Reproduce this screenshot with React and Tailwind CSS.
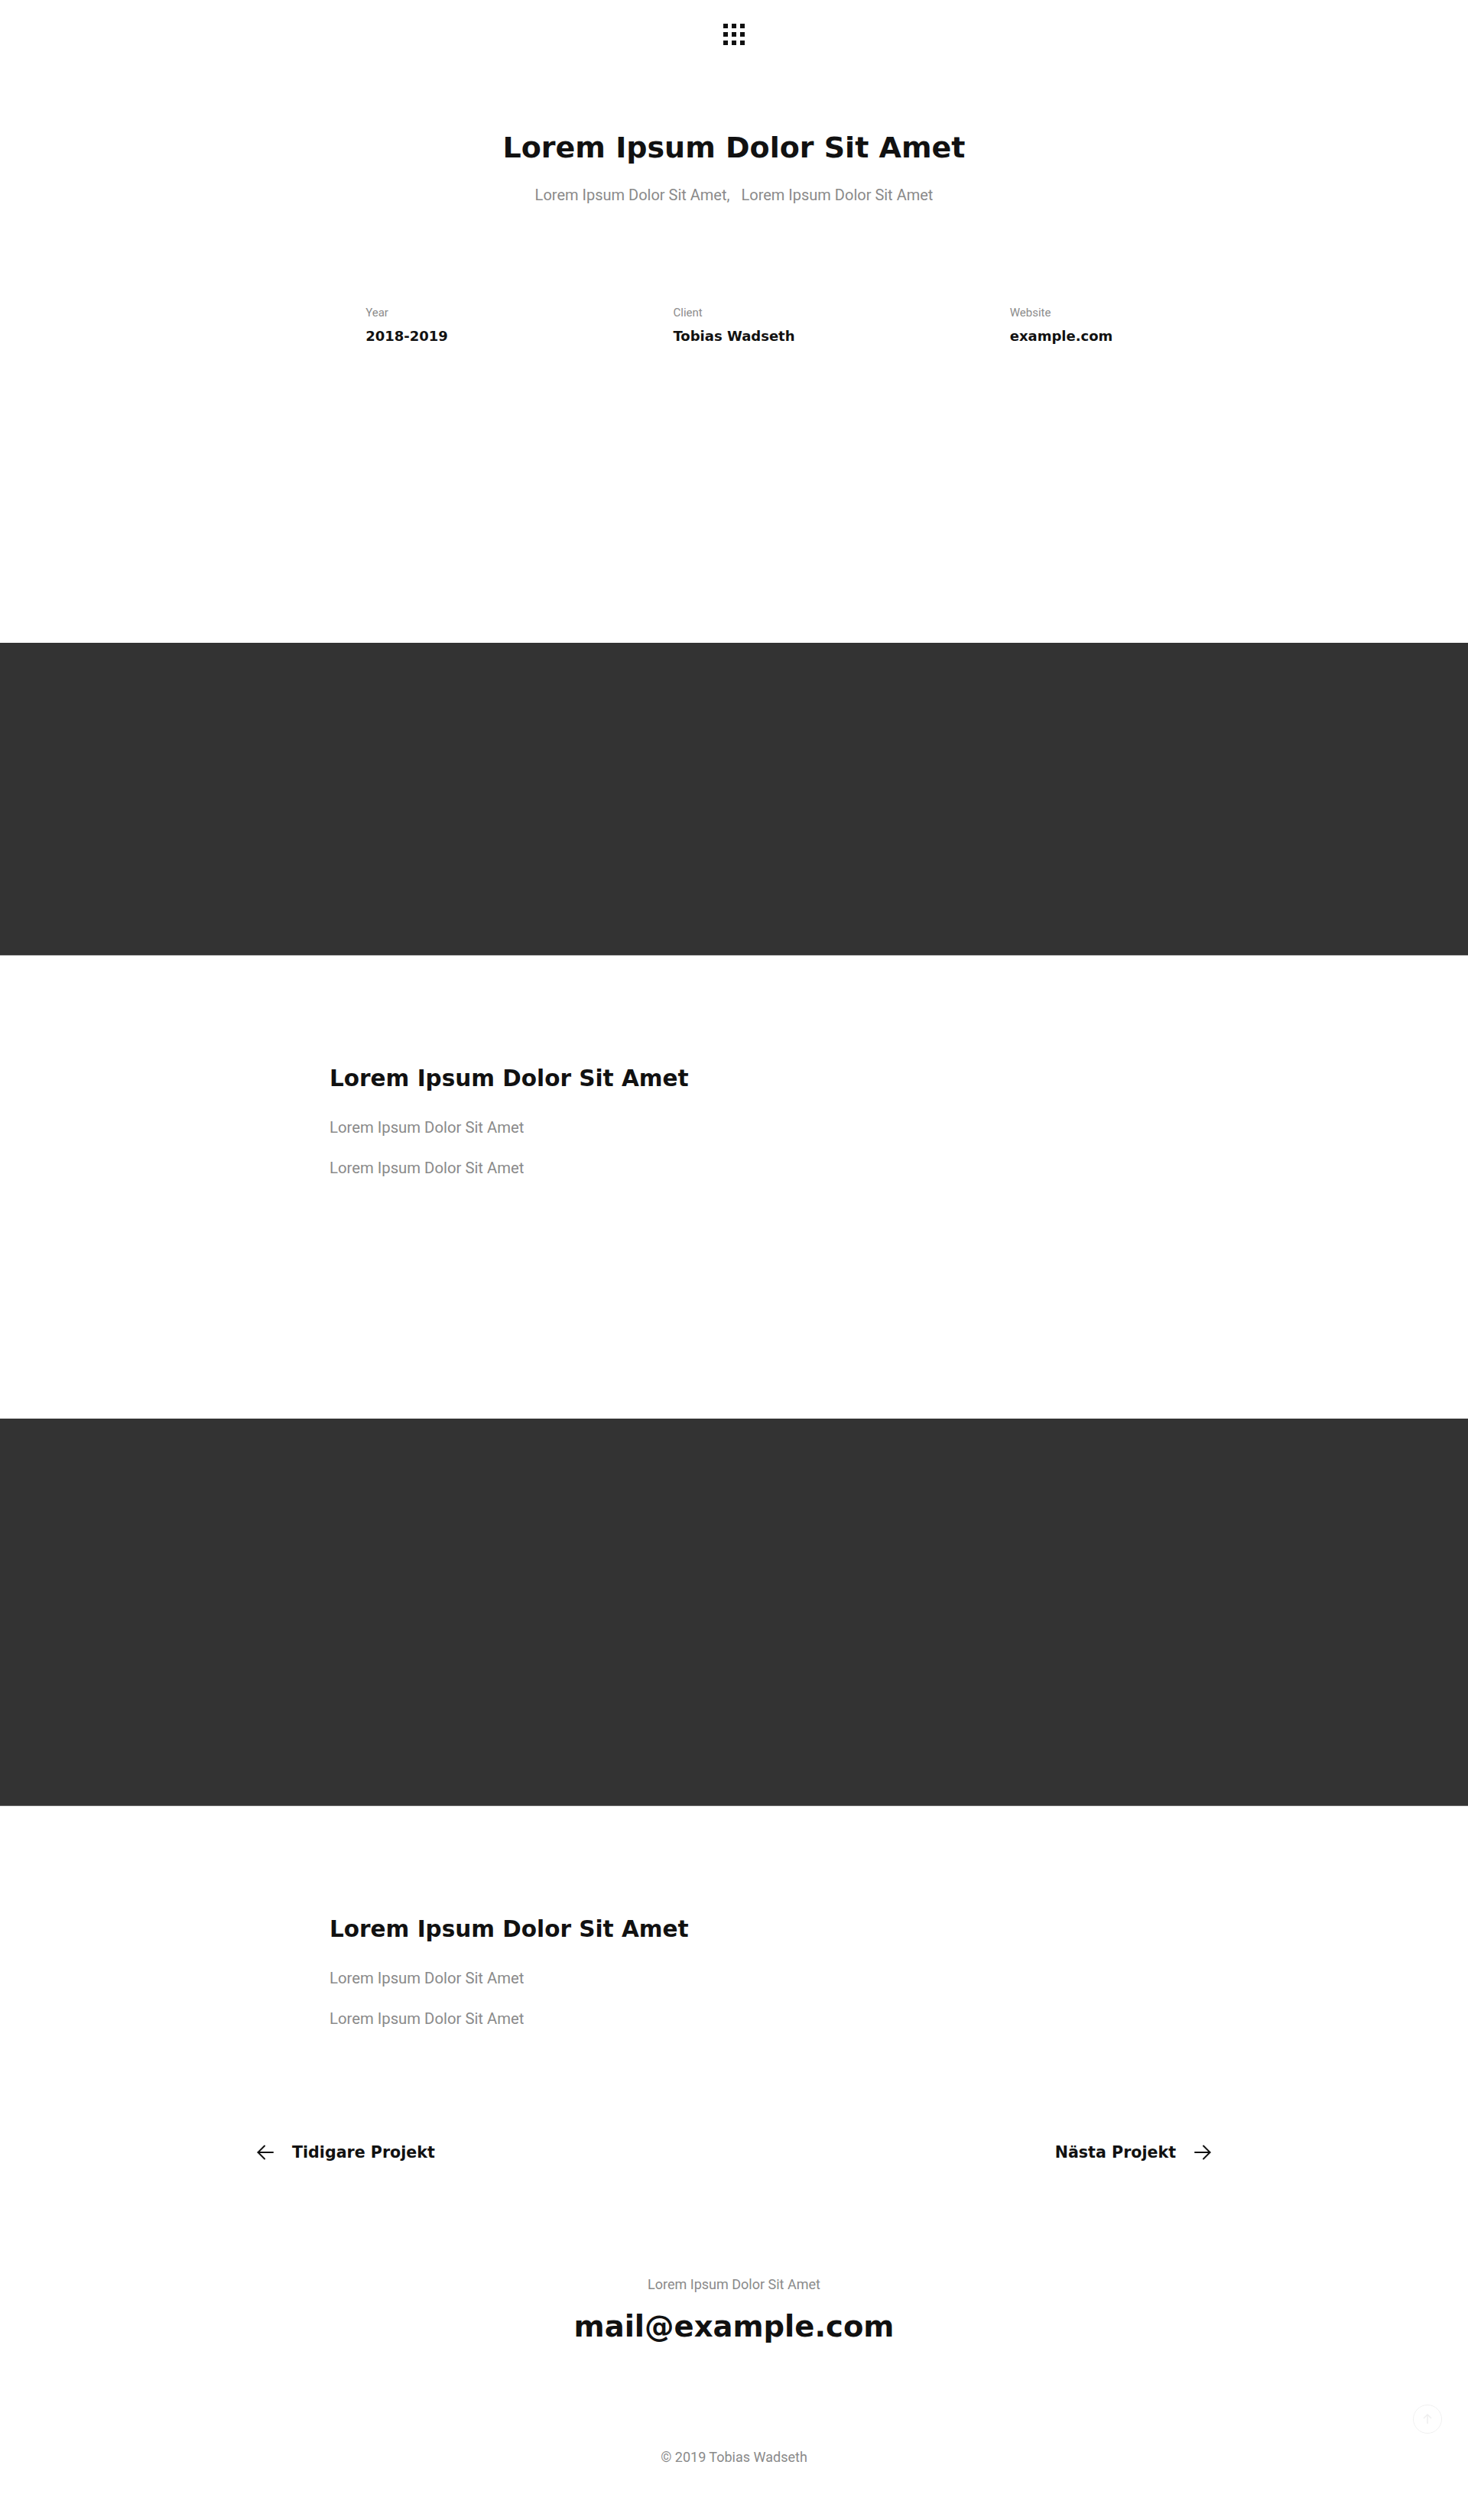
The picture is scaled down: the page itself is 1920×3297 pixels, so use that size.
import React from 'react'

const HEAD = { fontFamily: '"DejaVu Sans", "Open Sans", sans-serif' }
const BODY = { fontFamily: 'Roboto, "Liberation Sans", sans-serif' }

function MenuIcon() {
  return (
    <div className="grid grid-cols-3 gap-[5px] w-[28px]">
      {Array.from({ length: 9 }).map((_, i) => (
        <span key={i} className="block w-[6px] h-[6px] bg-[#111]" />
      ))}
    </div>
  )
}

function Arrow({ dir = 'left' }) {
  return (
    <svg width="22" height="20" viewBox="0 0 22 20" fill="none" stroke="#111" strokeWidth="2" strokeLinecap="round" strokeLinejoin="round"
      className={dir === 'right' ? 'rotate-180' : ''}>
      <path d="M21 10H1.5" />
      <path d="M10 1.5 1.5 10 10 18.5" />
    </svg>
  )
}

function Meta({ label, value }) {
  return (
    <div className="flex justify-center">
      <div>
        <p className="text-[15px] leading-[20px] text-[#8c8c8c]" style={BODY}>{label}</p>
        <p className="mt-[10px] text-[18px] leading-[22px] font-bold text-[#111]" style={HEAD}>{value}</p>
      </div>
    </div>
  )
}

function TextBlock() {
  return (
    <div className="w-[1058px] mx-auto">
      <h2 className="text-[29.5px] leading-[36px] font-bold text-[#111]" style={HEAD}>Lorem Ipsum Dolor Sit Amet</h2>
      <p className="mt-[32px] text-[20.3px] leading-[28px] text-[#8a8a8a]" style={BODY}>Lorem Ipsum Dolor Sit Amet</p>
      <p className="mt-[25px] text-[20.3px] leading-[28px] text-[#8a8a8a]" style={BODY}>Lorem Ipsum Dolor Sit Amet</p>
    </div>
  )
}

export default function App() {
  return (
    <div className="bg-white min-h-[3297px] pt-[31px] pb-[69px]">
      {/* Header */}
      <div className="flex justify-center">
        <MenuIcon />
      </div>

      {/* Hero */}
      <h1 className="mt-[111px] text-center text-[38px] leading-[46px] font-bold text-[#111]" style={HEAD}>
        Lorem Ipsum Dolor Sit Amet
      </h1>
      <p className="mt-[25px] text-center text-[20px] leading-[28px] text-[#8a8a8a]" style={BODY}>
        <span>Lorem Ipsum Dolor Sit Amet,</span>
        <span className="ml-[15px]">Lorem Ipsum Dolor Sit Amet</span>
      </p>

      {/* Project meta */}
      <div className="mt-[130px] w-[1284px] mx-auto grid grid-cols-3">
        <Meta label="Year" value="2018-2019" />
        <Meta label="Client" value="Tobias Wadseth" />
        <Meta label="Website" value="example.com" />
      </div>

      {/* Image placeholder */}
      <div className="mt-[390px] h-[409px] bg-[#333] border-b border-[#4d4d4d]" />

      <div className="mt-[143px]">
        <TextBlock />
      </div>

      <div className="mt-[314px] h-[507px] bg-[#333] border-b border-[#6b6b6b]" />

      <div className="mt-[143px]">
        <TextBlock />
      </div>

      {/* Prev / next */}
      <div className="mt-[147px] w-[1248px] mx-auto flex items-center justify-between h-[28px]">
        <a className="flex items-center gap-[24px]">
          <Arrow dir="left" />
          <span className="text-[20.6px] font-bold text-[#111]" style={HEAD}>Tidigare Projekt</span>
        </a>
        <a className="flex items-center gap-[24px]">
          <span className="text-[20.6px] font-bold text-[#111]" style={HEAD}>Nästa Projekt</span>
          <Arrow dir="right" />
        </a>
      </div>

      {/* Contact */}
      <div className="mt-[147px] text-center">
        <p className="text-[18px] leading-[24px] text-[#8a8a8a]" style={BODY}>Lorem Ipsum Dolor Sit Amet</p>
        <p className="mt-[20px] text-[38.5px] leading-[46px] font-bold text-[#111]" style={HEAD}>mail@example.com</p>
      </div>

      <p className="mt-[136px] text-center text-[18px] leading-[24px] text-[#8a8a8a]" style={BODY}>© 2019 Tobias Wadseth</p>

      {/* Scroll to top */}
      <button className="fixed right-[34px] bottom-[113px] w-[38px] h-[38px] rounded-full border border-[#f0f0f0] flex items-center justify-center">
        <svg width="16" height="16" viewBox="0 0 16 16" fill="none" stroke="#eeeeee" strokeWidth="1.5">
          <path d="M8 14V2M3 7l5-5 5 5" />
        </svg>
      </button>
    </div>
  )
}
